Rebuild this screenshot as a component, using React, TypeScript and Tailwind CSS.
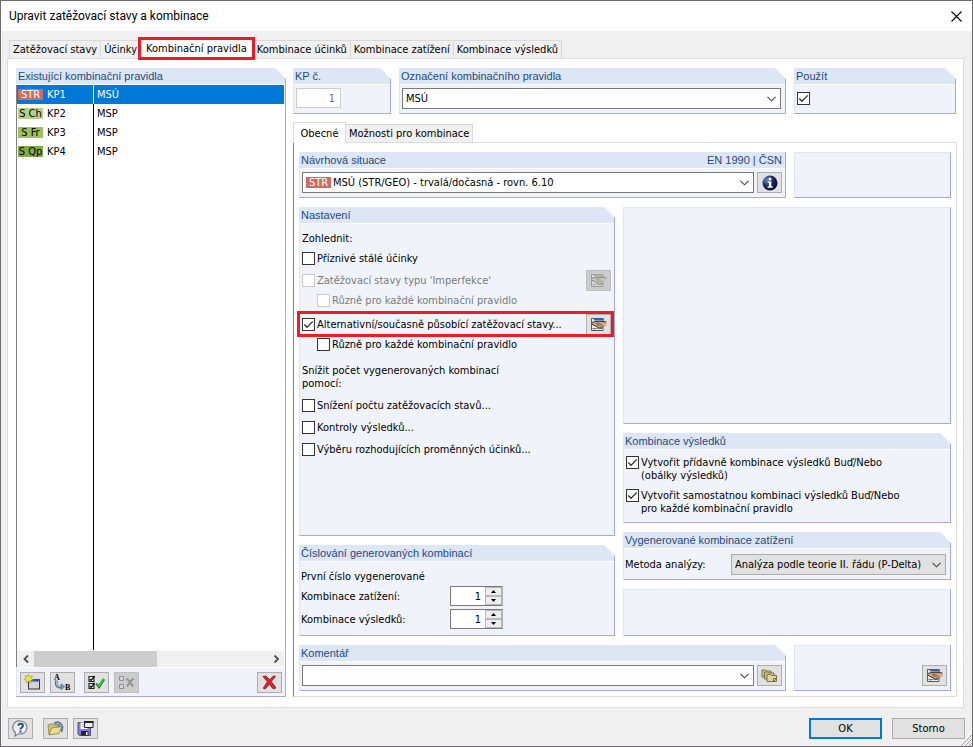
import { useState, type ReactNode } from "react";

const MAIN_TABS = [
  "Zatěžovací stavy",
  "Účinky",
  "Kombinační pravidla",
  "Kombinace účinků",
  "Kombinace zatížení",
  "Kombinace výsledků",
];

const RULES = [
  { badge: "STR", badgeClass: "bg-[#cd6b69] text-white", name: "KP1", label: "MSÚ" },
  { badge: "S Ch", badgeClass: "bg-[#b5d08c] text-black", name: "KP2", label: "MSP" },
  { badge: "S Fr", badgeClass: "bg-[#9cc05c] text-black", name: "KP3", label: "MSP" },
  { badge: "S Qp", badgeClass: "bg-[#84a947] text-black", name: "KP4", label: "MSP" },
];

export default function App() {
  const [selected, setSelected] = useState("KP1");

  return (
    <div className="flex min-h-screen flex-col border border-[#6e6b6e] bg-[#f0f0f0] font-['DejaVu_Sans_Condensed','DejaVu_Sans',sans-serif] text-[11px] leading-[13px] text-black">
      <header className="flex h-[30px] items-center justify-between bg-white pr-2.5 pl-2">
        <h1 className="font-[Roboto,sans-serif] text-[12px]">Upravit zatěžovací stavy a kombinace</h1>
        <button type="button" aria-label="Zavřít">
          <svg width="11" height="11" viewBox="0 0 11 11" stroke="#000" strokeWidth="1.1">
            <path d="M0.5 0.5l10 10M10.5 0.5l-10 10" />
          </svg>
        </button>
      </header>

      <nav className="flex h-[27px] items-end pl-2">
        {MAIN_TABS.map((tab) =>
          tab === "Kombinační pravidla" ? (
            <div key={tab} className="relative z-10 -mx-px -mb-px h-[21px] bg-white px-[7px]">
              <button type="button" className="h-5">{tab}</button>
              <span className="pointer-events-none absolute -inset-x-px -top-px -bottom-px border-3 border-[#ed1c24]" />
            </div>
          ) : (
            <button key={tab} type="button" className="-mr-px h-[18px] border border-b-0 border-[#d9d9d9] px-[3px]">
              {tab}
            </button>
          )
        )}
      </nav>

      <main className="mr-2 ml-[6px] flex flex-1 gap-[7px] border border-[#dcdcdc] bg-white pt-[9px] pr-1.5 pb-2.5 pl-2">
        <Group title="Existující kombinační pravidla" className="w-[270px] shrink-0">
          <div className="-ml-px flex flex-1 flex-col border-l border-[#828282] bg-white pr-px">
            <table className="w-full table-fixed border-separate border-spacing-0">
              <tbody>
                {RULES.map((rule) => (
                  <tr
                    key={rule.name}
                    onClick={() => setSelected(rule.name)}
                    className={selected === rule.name ? "h-[19px] bg-[#0078d7] text-white" : "h-[19px]"}
                  >
                    <td className={selected === rule.name ? "w-[77px] border-r border-white p-0 pl-px" : "w-[77px] border-r border-black p-0 pl-px"}>
                      <span className="flex items-center gap-1">
                        <Badge className={rule.badgeClass}>{rule.badge}</Badge>
                        {rule.name}
                      </span>
                    </td>
                    <td className="p-0 pl-[3px]">{rule.label}</td>
                  </tr>
                ))}
              </tbody>
            </table>
            <div className="w-[77px] flex-1 border-r border-black" />
            <div className="mt-px flex h-4 items-center bg-[#f0f0f0]">
              <ScrollArrow d="M6 1.5L2.5 5L6 8.5" label="Posunout doleva" />
              <div className="flex h-full flex-1">
                <div className="h-full w-[53%] bg-[#cdcdcd]" />
              </div>
              <ScrollArrow d="M2.5 1.5L6 5L2.5 8.5" label="Posunout doprava" />
            </div>
          </div>
          <div className="flex border-t border-white pt-1 pr-[3px] pb-[3px] pl-[3px]">
            <IconButton label="Nové pravidlo" className="mr-[5px]"><NewIcon /></IconButton>
            <IconButton label="Přečíslovat" className="mr-[9px]"><RenumberIcon /></IconButton>
            <IconButton label="Vybrat vše" className="mr-[5px]"><CheckAllIcon /></IconButton>
            <IconButton label="Zrušit výběr" disabled><UncheckIcon /></IconButton>
            <IconButton label="Smazat" className="ml-auto"><DeleteIcon /></IconButton>
          </div>
        </Group>

        <div className="flex min-w-0 flex-1 flex-col">
          <div className="flex gap-2 pr-px">
            <Group title="KP č." className="w-[98px]">
              <div className="px-0.5 pt-[3px] pb-1">
                <input
                  aria-label="KP č."
                  disabled
                  defaultValue="1"
                  className="block h-5 w-[45px] border border-[#cccccc] bg-white px-[5px] text-right text-[#6d6d6d]"
                />
              </div>
            </Group>
            <Group title="Označení kombinačního pravidla" className="min-w-0 flex-1">
              <div className="pt-[3px] pr-1 pb-1 pl-0.5">
                <Combo label="Označení kombinačního pravidla" options={["MSÚ", "MSP"]} />
              </div>
            </Group>
            <Group title="Použít" className="w-[162px]">
              <div className="px-0.5 pt-[7px] pb-2">
                <Check label="" ariaLabel="Použít" checked />
              </div>
            </Group>
          </div>

          <div className="relative z-10 -mb-px flex h-[29px] items-end">
            <button type="button" className="h-[21px] w-[53px] border border-b-0 border-[#dcdcdc] bg-white">
              Obecné
            </button>
            <button type="button" className="mb-px h-[18px] border border-b-0 border-l-0 border-[#d9d9d9] bg-[#f0f0f0] px-[3px]">
              Možnosti pro kombinace
            </button>
          </div>

          <section className="flex flex-1 flex-col gap-[9px] border border-[#dcdcdc] border-l-[#828282] px-[5px] pt-[9px] pb-[5px]">
            <div className="flex gap-2">
              <Group title="Návrhová situace" aside="EN 1990 | ČSN" square className="min-w-0 flex-1">
                <div className="flex gap-[3px] pt-[3px] pr-[3px] pb-1 pl-0.5">
                  <Combo
                    label="Návrhová situace"
                    badge="STR"
                    options={["MSÚ (STR/GEO) - trvalá/dočasná - rovn. 6.10"]}
                  />
                  <IconButton label="Informace"><InfoIcon /></IconButton>
                </div>
              </Group>
              <Blank className="w-[157px]" />
            </div>

            <div className="flex flex-1 gap-2">
              <div className="flex min-w-0 flex-1 flex-col gap-[9px]">
                <Group title="Nastavení" className="flex-1">
                  <div className="flex flex-col pt-1 pr-[3px] pl-0.5">
                    <p className="flex h-5 items-center">Zohlednit:</p>
                    <div className="flex h-5 items-center"><Check label="Příznivé stálé účinky" /></div>
                    <div className="flex h-6 items-center justify-between">
                      <Check label="Zatěžovací stavy typu 'Imperfekce'" disabled />
                      <IconButton label="Upravit imperfekce" disabled><EditIcon muted /></IconButton>
                    </div>
                    <div className="flex h-4 items-center pl-[15px]">
                      <Check label="Různě pro každé kombinační pravidlo" disabled />
                    </div>
                    <div className="relative mt-0.5 flex h-7 items-center justify-between">
                      <Check label="Alternativní/současně působící zatěžovací stavy..." checked />
                      <IconButton label="Upravit zatěžovací stavy"><EditIcon /></IconButton>
                      <span className="pointer-events-none absolute inset-x-0 inset-y-px z-10 -mr-[3px] -ml-[5px] border-3 border-[#ed1c24]" />
                    </div>
                    <div className="flex h-3 items-center pl-[15px]">
                      <Check label="Různě pro každé kombinační pravidlo" />
                    </div>
                    <p className="mt-3.5 mb-1">
                      Snížit počet vygenerovaných kombinací
                      <br />
                      pomocí:
                    </p>
                    <div className="flex h-[22px] items-center"><Check label="Snížení počtu zatěžovacích stavů..." /></div>
                    <div className="flex h-[22px] items-center"><Check label="Kontroly výsledků..." /></div>
                    <div className="flex h-[22px] items-center"><Check label="Výběru rozhodujících proměnných účinků..." /></div>
                  </div>
                </Group>
                <Group title="Číslování generovaných kombinací">
                  <div className="flex flex-col gap-[3px] pt-2 pb-1.5 pl-px">
                    <p>První číslo vygenerované</p>
                    <Spinner label="Kombinace zatížení:" />
                    <Spinner label="Kombinace výsledků:" />
                  </div>
                </Group>
              </div>

              <div className="flex w-[328px] shrink-0 flex-col gap-[9px]">
                <Blank className="flex-1" />
                <Group title="Kombinace výsledků">
                  <div className="flex flex-col gap-[7px] px-0.5 pt-1.5 pb-[7px]">
                    <Check label="Vytvořit přídavně kombinace výsledků Buď/Nebo" second="(obálky výsledků)" checked />
                    <Check label="Vytvořit samostatnou kombinaci výsledků Buď/Nebo" second="pro každé kombinační pravidlo" checked />
                  </div>
                </Group>
                <Group title="Vygenerované kombinace zatížení">
                  <div className="flex items-center justify-between pt-[5px] pr-1 pb-1 pl-px">
                    <label htmlFor="method">Metoda analýzy:</label>
                    <div className="w-[215px]">
                      <Combo id="method" gray options={["Analýza podle teorie II. řádu (P-Delta)"]} />
                    </div>
                  </div>
                </Group>
                <Blank className="h-[47px]" />
              </div>
            </div>

            <div className="flex gap-2">
              <Group title="Komentář" className="min-w-0 flex-1">
                <div className="flex gap-[3px] pt-[3px] pr-[3px] pb-1 pl-0.5">
                  <Combo label="Komentář" options={[""]} />
                  <IconButton label="Knihovna komentářů"><CommentsIcon /></IconButton>
                </div>
              </Group>
              <Blank className="flex w-[157px] items-end justify-end pr-[3px] pb-1">
                <IconButton label="Podrobnosti"><EditIcon /></IconButton>
              </Blank>
            </div>
          </section>
        </div>
      </main>

      <footer className="relative flex h-[38px] items-center pt-0.5 pr-[7px] pl-[7px]">
        <IconButton label="Nápověda" className="mr-2.5"><HelpIcon /></IconButton>
        <IconButton label="Otevřít" className="mr-[5px]"><FolderIcon /></IconButton>
        <IconButton label="Uložit"><SaveIcon /></IconButton>
        <button type="button" className="mr-2.5 ml-auto h-[21px] w-[73px] border-2 border-[#0078d7] bg-[#e1e1e1]">
          OK
        </button>
        <button type="button" className="h-[21px] w-[73px] border border-[#adadad] bg-[#e1e1e1]">
          Storno
        </button>
        <svg className="absolute right-0 bottom-0" width="12" height="12" viewBox="0 0 12 12" stroke="#a0a0a0">
          <path d="M1 12L12 1M5 12L12 5M9 12L12 9" />
        </svg>
      </footer>
    </div>
  );
}

type GroupProps = {
  title: string;
  aside?: string;
  square?: boolean;
  className?: string;
  children: ReactNode;
};

function Group({ title, aside, square, className = "", children }: GroupProps) {
  const cut = square ? "" : "[clip-path:polygon(-4px_0,calc(100%-11px)_0,100%_11px,100%_100%,-4px_100%)]";
  return (
    <section className={`flex flex-col border-r border-b border-l border-[#a6a6ee] border-l-[#dce6f5] bg-[#f0f4fa] ${cut} ${className}`}>
      <h2 className="flex h-[17px] shrink-0 justify-between border-b border-white bg-[#dce6f5] pr-[3px] pl-px font-['Liberation_Sans',Arial,sans-serif] text-[11px] leading-4 text-[#1f497d]">
        <span>{title}</span>
        {aside && <span>{aside}</span>}
      </h2>
      {children}
    </section>
  );
}

function Blank({ className = "", children }: { className?: string; children?: ReactNode }) {
  return (
    <div className={`border border-[#dce6f5] border-r-[#a6a6ee] border-b-[#a6a6ee] bg-[#f0f4fa] ${className}`}>
      {children}
    </div>
  );
}

function Badge({ className, children }: { className: string; children: ReactNode }) {
  return (
    <span className={`inline-block h-[11px] w-[25px] shrink-0 text-center leading-[11px] whitespace-nowrap ${className}`}>
      {children}
    </span>
  );
}

type CheckProps = {
  label: string;
  second?: string;
  ariaLabel?: string;
  checked?: boolean;
  disabled?: boolean;
};

function Check({ label, second, ariaLabel, checked, disabled }: CheckProps) {
  return (
    <label className={disabled ? "flex gap-0.5 text-[#7a7a7a]" : "flex gap-0.5"}>
      <span className="relative h-[13px] w-[13px] shrink-0">
        <input
          type="checkbox"
          aria-label={ariaLabel}
          defaultChecked={checked}
          disabled={disabled}
          className="peer block h-[13px] w-[13px] appearance-none border border-[#333333] bg-white disabled:border-[#cccccc]"
        />
        <svg className="pointer-events-none absolute inset-0 hidden peer-checked:block" width="13" height="13" viewBox="0 0 13 13" fill="none" stroke="#333" strokeWidth="1.3">
          <path d="M2.3 6.5l2.7 2.8L10.8 3.4" />
        </svg>
      </span>
      <span className="whitespace-nowrap">
        {label}
        {second && <><br />{second}</>}
      </span>
    </label>
  );
}

type ComboProps = {
  id?: string;
  label?: string;
  badge?: string;
  gray?: boolean;
  options: string[];
};

function Combo({ id, label, badge, gray, options }: ComboProps) {
  return (
    <div className={gray ? "relative flex h-[21px] w-full items-center border border-[#adadad] bg-[#e1e1e1] pl-[3px]" : "relative flex h-[21px] w-full min-w-0 items-center border border-[#7a7a7a] bg-white pl-[3px]"}>
      {badge && <Badge className="mr-0.5 bg-[#cd6b69] text-white">{badge}</Badge>}
      <select id={id} aria-label={label} className="h-full min-w-0 flex-1 appearance-none">
        {options.map((option) => (
          <option key={option}>{option}</option>
        ))}
      </select>
      <svg className="pointer-events-none absolute right-1" width="9" height="6" viewBox="0 0 9 6" fill="none" stroke="#444" strokeWidth="1.1">
        <path d="M0.5 0.8l4 4 4-4" />
      </svg>
    </div>
  );
}

function Spinner({ label }: { label: string }) {
  const [value, setValue] = useState(1);
  return (
    <div className="flex items-center">
      <label htmlFor={label} className="w-[149px]">{label}</label>
      <div className="flex h-5 w-[53px] border border-r-[#adadad] border-[#7a7a7a] bg-white">
        <input
          id={label}
          value={value}
          onChange={(e) => setValue(Number(e.target.value))}
          className="w-[34px] pr-1 text-right"
        />
        <div className="flex flex-1 flex-col bg-[#f0f0f0]">
          <button type="button" aria-label="Zvýšit" onClick={() => setValue(value + 1)} className="flex flex-1 items-center justify-center border border-[#b8b8b8] bg-[#ededed]">
            <svg width="5" height="3" viewBox="0 0 5 3"><path d="M0 3L2.5 0L5 3z" /></svg>
          </button>
          <button type="button" aria-label="Snížit" onClick={() => setValue(value - 1)} className="flex flex-1 items-center justify-center border border-[#b8b8b8] bg-[#ededed]">
            <svg width="5" height="3" viewBox="0 0 5 3"><path d="M0 0L2.5 3L5 0z" /></svg>
          </button>
        </div>
      </div>
    </div>
  );
}

function ScrollArrow({ d, label }: { d: string; label: string }) {
  return (
    <button type="button" aria-label={label} className="flex w-[17px] items-center justify-center">
      <svg width="8" height="10" viewBox="0 0 8 10" fill="none" stroke="#505050" strokeWidth="1.8">
        <path d={d} />
      </svg>
    </button>
  );
}

type IconButtonProps = {
  label: string;
  disabled?: boolean;
  className?: string;
  children: ReactNode;
};

function IconButton({ label, disabled, className = "", children }: IconButtonProps) {
  return (
    <button
      type="button"
      aria-label={label}
      disabled={disabled}
      className={`flex h-[21px] w-[25px] shrink-0 items-center justify-center border border-[#adadad] bg-[#e1e1e1] disabled:border-[#bfbfbf] disabled:bg-[#cccccc] ${className}`}
    >
      {children}
    </button>
  );
}

function NewIcon() {
  return (
    <svg width="17" height="17" viewBox="0 0 17 17">
      <rect x="4.5" y="5.500" width="11" height="9.500" fill="#d2d2d8" stroke="#333" />
      <path d="M4 5h12v2.500H4z" fill="#2c4f9e" />
      <path d="M4.500 0l1.200 2.700 2.800-.9-1.300 2.600 2.300 1.500-2.800.6.2 2.500-2.300-1.700L2.300 9l.2-2.700L0 5.500l2.200-1.300L1.200 1.700l2.300.8z" fill="#f3e13c" stroke="#8f8420" strokeWidth=".5" />
    </svg>
  );
}

function RenumberIcon() {
  return (
    <svg width="17" height="17" viewBox="0 0 17 17">
      <text x="0" y="6" fontFamily="Liberation Serif" fontWeight="bold" fontSize="8">A</text>
      <text x="11" y="16" fontFamily="Liberation Serif" fontWeight="bold" fontSize="8">B</text>
      <path d="M2.500 6.500C1.500 12 4 13.500 8 13" fill="none" stroke="#53698f" strokeWidth="3" />
      <path d="M2.600 6.500C1.900 11.500 4 13 8 12.800" fill="none" stroke="#a9bfe6" strokeWidth="1.500" />
      <path d="M7 9.500l4 3-4 3.500z" fill="#7892c4" stroke="#53698f" strokeWidth=".5" />
    </svg>
  );
}

function CheckAllIcon() {
  return (
    <svg width="17" height="15" viewBox="0 0 17 15" fill="none">
      <path d="M1 1.500h5v5H1zM1 8.500h5v5H1z" fill="#fff" stroke="#222" strokeWidth="1.200" />
      <path d="M2 4l1.200 1.500L6.500 1M2 11l1.200 1.500L6.500 8" stroke="#111" strokeWidth="1.300" />
      <path d="M8.500 8.500l2.500 3.200L16 4" stroke="#157a22" strokeWidth="2.600" />
      <path d="M8.800 8.500l2.200 2.600L15.800 4.200" stroke="#2fd04a" strokeWidth="1.400" />
    </svg>
  );
}

function UncheckIcon() {
  return (
    <svg width="17" height="15" viewBox="0 0 17 15" fill="none" stroke="#909090">
      <path d="M1.500 1.500h4v4h-4zM1.500 9.500h4v4h-4z" fill="#d6d6d6" />
      <path d="M8.500 3.500c3 2 5 5 6.500 8M15.500 3.500c-3 2-5 5-6.500 8" strokeWidth="2" />
    </svg>
  );
}

function DeleteIcon() {
  return (
    <svg width="15" height="15" viewBox="0 0 15 15">
      <path d="M1 1.500L4 1l3.500 3.700L12 .8l1.500.7-4.300 5L14 13l-3 .8-3.700-4.700L3.200 14l-2-.8 4.200-6.400z" fill="#de2525" stroke="#7a1010" strokeWidth=".8" />
    </svg>
  );
}

function HelpIcon() {
  return (
    <svg width="17" height="17" viewBox="0 0 17 17">
      <path d="M8.500 1a6.800 6.500 0 1 1-2 12.800L3 16l.4-3.500A6.800 6.500 0 0 1 8.500 1z" fill="#eef0f4" stroke="#7d7d85" strokeWidth="1.200" />
      <path d="M6.200 5.600C6.500 3.200 11 3 11 5.500c0 2-2.500 1.800-2.500 3.900" fill="none" stroke="#2a4787" strokeWidth="1.900" />
      <circle cx="8.400" cy="11.700" r="1.100" fill="#2a4787" />
    </svg>
  );
}

function FolderIcon() {
  return (
    <svg width="17" height="15" viewBox="0 0 17 15">
      <path d="M7 2c3-2.500 8-1 9 4l-1 5-3-5z" fill="#587fb5" stroke="#33527e" strokeWidth=".6" />
      <path d="M8.500 3c2.500-1 5 0 6 3" fill="none" stroke="#c6dbf2" />
      <path d="M1 4l4-1.500L7 4l4-.5 1 8-10 2z" fill="#d5c272" stroke="#82702c" strokeWidth=".7" />
      <path d="M4.500 7L15 5.500 12 12.500 2 14z" fill="#eadb97" stroke="#82702c" strokeWidth=".7" />
    </svg>
  );
}

function SaveIcon() {
  return (
    <svg width="17" height="17" viewBox="0 0 17 17">
      <path d="M1 2.500h12.500v13H2.500L1 14z" fill="#8080d4" stroke="#44448a" strokeWidth=".9" />
      <path d="M3.500 2.500h7V9h-7z" fill="#fff" />
      <path d="M4.500 4.500h4M4.500 6.500h5" stroke="#aaa" strokeWidth=".8" />
      <path d="M4 11h7.500v4.500H4z" fill="#22223c" />
      <path d="M9 12h1.500v3H9z" fill="#fff" />
      <path d="M7.500 1.500h8.500v6H7.500z" fill="#eee" stroke="#222" />
      <path d="M7 1h9.500v2H7z" fill="#222" />
    </svg>
  );
}

function EditIcon({ muted }: { muted?: boolean }) {
  const line = muted ? "#9a9a95" : "#55555a";
  const edge = muted ? "#85857f" : "#3d3026";
  return (
    <svg width="17" height="15" viewBox="0 0 17 15">
      <path d="M1.500 1.500h11.500v12H1.500z" fill={muted ? "#dcdcd8" : "#ededed"} stroke={line} />
      <path d="M4 1h9.500v2.500H4z" fill={muted ? "#a8a8a4" : "#3f5f9c"} />
      <path d="M2 11.500h10M4.500 11v2" stroke={line} strokeWidth=".6" />
      <path d="M1.500 5.500L6 4.500l4-.2L16.500 5v3.800l-3 .6-2 1.600H9L5.500 9 2 7.500z" fill={muted ? "#c9c9c0" : "#d6ad84"} />
      <path d="M1.500 5.500L6 4.500l4-.2L16.500 5M13.500 9.200L11.500 11H9L5.500 9 2 7.200" fill="none" stroke={edge} strokeWidth="1" />
      <path d="M6 6.500l3.500-.4 3.200 2.700M6.500 8.200l2.500-.4 2 1.700" fill="none" stroke={edge} strokeWidth=".7" />
    </svg>
  );
}

function InfoIcon() {
  return (
    <svg width="16" height="16" viewBox="0 0 16 16">
      <defs>
        <radialGradient id="info" cx=".3" cy=".3" r=".8">
          <stop offset="0" stopColor="#6f86cc" />
          <stop offset=".5" stopColor="#1c2a63" />
          <stop offset="1" stopColor="#050a24" />
        </radialGradient>
      </defs>
      <circle cx="8" cy="8" r="7.500" fill="url(#info)" />
      <circle cx="8" cy="4" r="1.500" fill="#fff" />
      <path d="M5.800 6.500h3.500v4.800h1.400v1.400H5.600v-1.400H7V7.900H5.800z" fill="#fff" />
    </svg>
  );
}

function CommentsIcon() {
  return (
    <svg width="17" height="14" viewBox="0 0 17 14" fill="#d2c68c" stroke="#6f6440" strokeWidth=".9">
      <path d="M1 8V1h3.500l1 1H10v6z" />
      <path d="M3.500 10V3h3.500l1 1H13v6z" />
      <path d="M6 12.500V5.500h3.500l1 1H15.500v6z" fill="#e0d6a2" />
      <path d="M12.500 12.500V9.500h3z" fill="#fff" />
    </svg>
  );
}
